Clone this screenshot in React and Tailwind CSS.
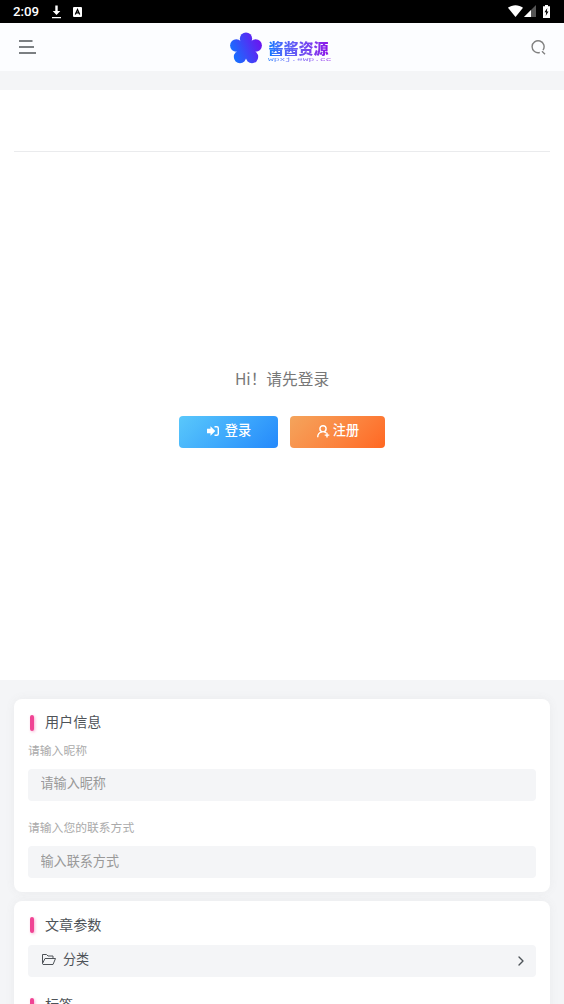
import { ChevronRight } from 'lucide-react';

const StatusBar = () => (
  <div className="flex h-[22.500px] shrink-0 items-center bg-black pr-[14px] pl-[13px] text-white">
    <span className="w-[39px] pt-px font-['Roboto',sans-serif] text-[13.300px] leading-none font-medium">2:09</span>
    <svg className="mt-px h-3.5 w-[9px]" viewBox="0 0 9 14" fill="currentColor">
      <path d="M3.300 .5h2.400v5.500H8.300L4.500 10 .7 6h2.600zM0 12h9v1.300H0z" />
    </svg>
    <svg className="mt-px ml-3 h-[10px] w-[9px]" viewBox="0 0 9 10">
      <rect width="9" height="10" rx="1" fill="white" />
      <path d="M2.300 7.500 4.500 2.500 6.700 7.500M3.200 5.800h2.600" fill="none" stroke="black" strokeWidth="1.300" />
    </svg>
    <div className="flex-1" />
    <svg className="h-3 w-[15px]" viewBox="0 0 15 12" fill="currentColor">
      <path d="M0 2.800C4.200-.6 10.800-.6 15 2.800L7.500 12z" />
    </svg>
    <svg className="ml-[1px] h-3 w-3" viewBox="0 0 12 12">
      <path d="M0 12 12 0v12z" fill="#555" />
      <path d="M0 12 7 5v7z" fill="white" />
    </svg>
    <svg className="ml-[7px] h-[13px] w-[7px]" viewBox="0 0 7 13">
      <path d="M2 0h3v1.200h2V13H0V1.200h2z" fill="white" />
      <path d="M4.300 3 1.500 7.300h1.700L2.700 11l2.800-4.500H3.800z" fill="black" />
    </svg>
  </div>
);

const Logo = () => (
  <div className="mt-[2px] flex h-[34px] w-[108px] items-center">
    <svg className="h-[32px] w-[32px] shrink-0" viewBox="0 0 32 32">
      <defs>
        <linearGradient id="flower" gradientUnits="userSpaceOnUse" x1="2" y1="22" x2="30" y2="10">
          <stop stopColor="#1670ff" />
          <stop offset="1" stopColor="#6a16f0" />
        </linearGradient>
      </defs>
      <g fill="url(#flower)">
        <circle cx="16" cy="6.700" r="6.200" />
        <circle cx="25.700" cy="13.500" r="6.200" />
        <circle cx="22" cy="25" r="6.200" />
        <circle cx="10" cy="25" r="6.200" />
        <circle cx="6.300" cy="13.500" r="6.200" />
        <circle cx="16" cy="17" r="9.500" />
      </g>
    </svg>
    <div className="ml-[6px] shrink-0 pt-[7px] whitespace-nowrap">
      <div className="ml-px w-[60px] bg-linear-to-r from-[#0078ff] to-[#8d08e8] bg-clip-text font-['Noto_Sans_CJK_SC',sans-serif] text-[15px] leading-[17px] font-black text-transparent">
        酱酱资源
      </div>
      <div className="w-[36px] origin-left scale-x-[1.750] bg-linear-to-r from-[#3388ff] to-[#a344ee] bg-clip-text font-['Liberation_Mono',monospace] text-[5.500px] leading-[7px] text-transparent">
        wpxj.ewp.cc
      </div>
    </div>
  </div>
);

const Header = () => (
  <header className="flex h-[48.500px] shrink-0 items-center justify-between bg-[#fcfdff] pr-[18px] pl-[19px]">
    <svg className="h-4 w-[17px]" viewBox="0 0 17 16" stroke="#7b7f82" strokeWidth="1.900">
      <path d="M0 2h13.500M0 8h15M0 14h17" />
    </svg>
    <Logo />
    <svg className="mt-[2px] h-[15px] w-[15px]" viewBox="0 0 15 15" fill="none" stroke="#808080" strokeWidth="1.400">
      <path d="M8.800 12.500A6 6 0 1 1 12 10.200M11 11.300l3 2.900" />
    </svg>
  </header>
);

const LoginIcon = () => (
  <svg className="-mt-[2px] h-[10px] w-3" viewBox="0 0 12 10">
    <path d="M0 2.800h3.500V.3L8.300 5 3.500 9.700V7.200H0z" fill="white" />
    <path d="M7.500.8h2.300q1.500 0 1.500 1.500v5.400q0 1.500-1.500 1.500H7.500" fill="none" stroke="white" strokeWidth="1.400" />
  </svg>
);

const RegisterIcon = () => (
  <svg className="-mt-[2px] h-[13px] w-[13px]" viewBox="0 0 13 13" fill="none" stroke="white" strokeWidth="1.400">
    <circle cx="6" cy="3.800" r="3.100" />
    <path d="M.7 12.300c0-3 1.800-5 4.300-5.400M7.300 6.900l2 1M10 7.800v4.600M7.700 10.100h4.600" />
  </svg>
);

const SectionTitle = ({ children }) => (
  <div className="flex h-5 items-center pl-4">
    <span className="mt-[3px] h-4 w-1 rounded-sm bg-[#f04494] shadow-[1px_1px_3px_#f0449466]" />
    <h2 className="ml-[11px] text-[14.100px] leading-5 text-[#4e5358]">{children}</h2>
  </div>
);

const Field = ({ label, placeholder }) => (
  <label className="block px-3.5">
    <span className="block h-[18px] text-[11.800px] leading-[18px] text-[#aaa]">{label}</span>
    <input
      className="mt-[10px] block h-8 w-full rounded bg-[#f4f5f7] px-[12.500px] pb-[4px] text-[13.100px] text-[#4e5358] outline-none placeholder:text-[#999]"
      placeholder={placeholder}
    />
  </label>
);

const App = () => {
  const fields = [
    { label: '请输入昵称', placeholder: '请输入昵称' },
    { label: '请输入您的联系方式', placeholder: '输入联系方式' },
  ];

  return (
    <div className="flex h-[1004px] flex-col overflow-hidden bg-[#f4f5f7] font-['Noto_Sans_CJK_SC',sans-serif]">
      <StatusBar />
      <Header />

      {/* Login prompt */}
      <section className="mt-[19px] h-[590px] shrink-0 bg-white px-3.5">
        <div className="h-[62px] border-b border-[#eaebed]" />
        <p className="mt-[215px] text-center text-[15.700px] leading-6 text-[#777]">Hi！请先登录</p>
        <div className="mt-[25px] flex justify-center gap-3 text-[13.200px] font-medium text-white">
          <button className="flex h-8 w-[99px] items-center justify-center gap-[6px] rounded bg-linear-135 from-[#5ac8fb] to-[#2589fb] pl-px">
            <LoginIcon />
            <span className="-mt-[5px]">登录</span>
          </button>
          <button className="flex h-8 w-[95px] items-center justify-center gap-[3px] rounded bg-linear-135 from-[#f4a45c] to-[#ff6721] pl-px">
            <RegisterIcon />
            <span className="-mt-[5px]">注册</span>
          </button>
        </div>
      </section>

      {/* Contact details */}
      <section className="mx-3.5 mt-[18.500px] h-[193.500px] shrink-0 rounded-lg bg-white pt-[12.500px] shadow-[0_0_10px_rgba(116,116,116,0.08)]">
        <SectionTitle>用户信息</SectionTitle>
        <div className="mt-[9.500px] flex flex-col gap-[17.500px]">
          {fields.map((field) => (
            <Field key={field.label} label={field.label} placeholder={field.placeholder} />
          ))}
        </div>
      </section>

      {/* Article options */}
      <section className="mx-3.5 mt-[9px] h-[150px] shrink-0 rounded-lg bg-white pt-[12.500px] shadow-[0_0_10px_rgba(116,116,116,0.08)]">
        <SectionTitle>文章参数</SectionTitle>
        <button className="mx-3.5 mt-[11.500px] flex h-8 w-[508px] items-center rounded bg-[#f4f5f7] pr-[9px] pl-[14px] text-[13.100px] text-[#4e5358]">
          <svg className="-mt-[3px] h-[11px] w-[14px]" viewBox="0 0 14 11" fill="none" stroke="currentColor" strokeLinejoin="round">
            <path d="M.5 9.500v-9h4l1.500 1.500h5v2.500M.5 9.500 3 4.500h10.500l-2.500 6H1z" />
          </svg>
          <span className="-mt-[5px] ml-[7px]">分类</span>
          <ChevronRight className="-mr-[1.500px] ml-auto h-4 w-4" strokeWidth={2} />
        </button>
        <div className="mt-[17px]">
          <SectionTitle>标签</SectionTitle>
        </div>
      </section>
    </div>
  );
};

export default App;
